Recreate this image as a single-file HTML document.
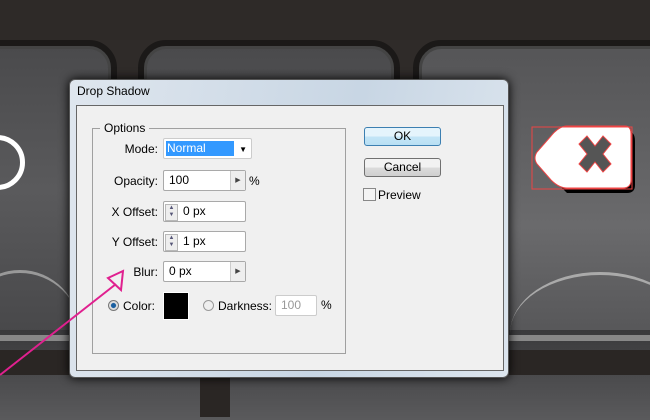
<!DOCTYPE html>
<html><head><style>
body{margin:0;width:650px;height:417px;overflow:hidden;position:relative;background:#2f2b29;font-family:"Liberation Sans",sans-serif;font-size:12px;color:#000}
.a{position:absolute}
.key{position:absolute;border-radius:28px;border:6px solid #1b1918;background:linear-gradient(#4a4a4c,#5a5a5c 40%,#3f3f41);box-shadow:inset 0 0 0 3px #444}
.field{position:absolute;background:#fff;border:1px solid #a9a9a9;border-radius:2px;box-sizing:border-box;height:21px;padding-left:5px;line-height:19px}
.lbl{position:absolute;text-align:right;width:80px}
.spin{position:absolute;left:1px;top:2px;width:11px;height:15px;border:1px solid #b8b8b8;background:#eee;font-size:6px;line-height:7px;text-align:center;color:#557}
.arr{position:absolute;right:0;top:0;width:14px;height:19px;background:#eee;border-left:1px solid #ccc;font-size:7px;line-height:19px;text-align:center;color:#444}
.btn{position:absolute;border:1px solid #707070;border-radius:3px;background:linear-gradient(#f2f2f2 50%,#dcdcdc 50%,#cfcfcf);text-align:center;box-sizing:border-box}
</style></head><body>
<div class="a" style="left:0;top:0;width:650px;height:40px;background:#2e2a28"></div>
<div class="key" style="left:-40px;top:40px;width:145px;height:360px"></div>
<div class="key" style="left:138px;top:40px;width:250px;height:360px"></div>
<div class="key" style="left:413px;top:40px;width:260px;height:360px;background:linear-gradient(#555557,#6a6a6c 50%,#4a4a4c)"></div>
<div class="a" style="left:0;top:330px;width:650px;height:90px;background:linear-gradient(#3a3a3c,#5a5a5c)"></div>
<div class="a" style="left:0;top:335px;width:650px;height:6px;background:#888"></div>
<div class="a" style="left:0;top:350px;width:650px;height:25px;background:#2a2624"></div>
<div class="a" style="left:200px;top:375px;width:30px;height:42px;background:#2a2624"></div>
<div class="a" style="left:-30px;top:135px;width:45px;height:45px;border:5px solid #fff;border-radius:50%"></div>
<div class="a" style="left:-40px;top:270px;width:120px;height:120px;border-top:3px solid #999;border-radius:50%"></div>
<div class="a" style="left:510px;top:272px;width:180px;height:120px;border-top:3px solid #aaa;border-radius:50%"></div>
<svg class="a" style="left:525px;top:120px" width="115" height="80">
<path d="M40 8 H100 Q108 8 108 18 V62 Q108 70 100 70 H40 L10 40 Z" transform="translate(2,3)" fill="#000"/>
<path d="M42 6 H100 Q106 6 106 14 V60 Q106 68 98 68 H42 Q34 68 26 60 L12 44 Q8 38 12 32 L26 16 Q34 6 42 6 Z" fill="#fff" stroke="#e44" stroke-width="1"/>
<path d="M62 16 L70 26 L78 16 L86 24 L78 34 L86 44 L78 52 L70 42 L62 52 L54 44 L62 34 L54 24 Z" fill="#555" stroke="#e44"/>
<rect x="7" y="7" width="100" height="62" fill="none" stroke="#e44"/>
</svg>
<div class="a" style="left:69px;top:79px;width:440px;height:299px;border-radius:6px;background:linear-gradient(100deg,#dfe6ee,#c8d6e4 60%,#dce5ee);border:1px solid #555;box-sizing:border-box;box-shadow:0 0 10px #000"></div>
<div class="a" style="left:77px;top:84px">Drop Shadow</div>
<div class="a" style="left:76px;top:105px;width:428px;height:266px;background:#f0f0f0;border:1px solid #666;box-sizing:border-box"></div>
<div class="a" style="left:92px;top:128px;width:254px;height:226px;border:1px solid #a0a0a0;box-sizing:border-box"></div>
<div class="a" style="left:100px;top:121px;background:#f0f0f0;padding:0 4px">Options</div>
<div class="lbl" style="left:78px;top:142px">Mode:</div>
<div class="field" style="left:163px;top:138px;width:89px;border-color:#ccc;padding:2px"><div style="background:#3399ff;color:#fff;width:67px;height:15px;line-height:15px;padding-left:1px">Normal</div><div style="position:absolute;right:4px;top:1px;font-size:8px">▼</div></div>
<div class="lbl" style="left:78px;top:174px">Opacity:</div>
<div class="field" style="left:163px;top:170px;width:83px">100<div class="arr">▶</div></div>
<div class="a" style="left:249px;top:174px">%</div>
<div class="lbl" style="left:78px;top:205px">X Offset:</div>
<div class="field" style="left:163px;top:201px;width:83px;padding-left:19px"><div class="spin">▲<br>▼</div>0 px</div>
<div class="lbl" style="left:78px;top:235px">Y Offset:</div>
<div class="field" style="left:163px;top:231px;width:83px;padding-left:19px"><div class="spin">▲<br>▼</div>1 px</div>
<div class="lbl" style="left:78px;top:265px">Blur:</div>
<div class="field" style="left:163px;top:261px;width:83px">0 px<div class="arr">▶</div></div>
<div class="a" style="left:108px;top:300px;width:9px;height:9px;border:1px solid #777;border-radius:50%;background:radial-gradient(#1a5fa0 35%,#ddd 45%)"></div>
<div class="a" style="left:123px;top:299px">Color:</div>
<div class="a" style="left:163px;top:292px;width:24px;height:26px;background:#000;border:1px solid #fff"></div>
<div class="a" style="left:203px;top:300px;width:9px;height:9px;border:1px solid #999;border-radius:50%;background:#eee"></div>
<div class="a" style="left:218px;top:299px">Darkness:</div>
<div class="field" style="left:275px;top:295px;width:42px;color:#999;border-color:#ccc">100</div>
<div class="a" style="left:321px;top:298px">%</div>
<div class="btn" style="left:364px;top:127px;width:77px;height:19px;border-color:#3c7fb1;background:linear-gradient(#e5f4fc 50%,#c4e5f6 50%,#b8dff4);line-height:17px">OK</div>
<div class="btn" style="left:364px;top:158px;width:77px;height:19px;line-height:17px">Cancel</div>
<div class="a" style="left:363px;top:188px;width:11px;height:11px;border:1px solid #888;background:#f4f4f4"></div>
<div class="a" style="left:378px;top:188px">Preview</div>
<svg class="a" style="left:0;top:260px" width="130" height="130"><path d="M0 115 L116 24" stroke="#e0208f" stroke-width="2"/><path d="M108 18 L123 11 L121 30 Z" fill="none" stroke="#e0208f" stroke-width="2"/></svg>
</body></html>
